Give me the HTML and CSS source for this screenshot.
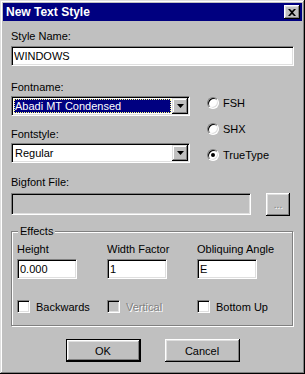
FILE: index.html
```html
<!DOCTYPE html>
<html lang="en">
  <head>
    <meta charset="UTF-8" />
    <title>New Text Style</title>
    <link rel="stylesheet" href="styles.css">
  </head>
  <body>
    <div class="window">
      <div class="titlebar">
        <span class="title">New Text Style</span>
        <span class="close">
          <svg width="8" height="7" viewBox="0 0 8 7"><path d="M0 0h2l2 2 2-2h2L5 3.5 8 7H6L4 5 2 7H0l3-3.5z" fill="#000"/></svg>
        </span>
      </div>

      <div class="content">
        <div class="label label-name">Style Name:</div>
        <input class="field field-name" type="text" value="WINDOWS" readonly>

        <div class="font-row">
          <div class="font-col">
            <div class="label">Fontname:</div>
            <div class="combo">
              <span class="combo-value combo-selected">Abadi MT Condensed</span>
              <span class="combo-btn"><svg width="7" height="4" viewBox="0 0 7 4"><path d="M0 0h7L3.5 4z" fill="#000"/></svg></span>
            </div>
            <div class="label label-style">Fontstyle:</div>
            <div class="combo">
              <span class="combo-value">Regular</span>
              <span class="combo-btn"><svg width="7" height="4" viewBox="0 0 7 4"><path d="M0 0h7L3.5 4z" fill="#000"/></svg></span>
            </div>
          </div>
          <div class="radios">
            <div class="radio"><span class="radio-dot"></span>FSH</div>
            <div class="radio"><span class="radio-dot"></span>SHX</div>
            <div class="radio"><span class="radio-dot checked"></span>TrueType</div>
          </div>
        </div>

        <div class="label label-bigfont">Bigfont File:</div>
        <div class="bigfont-row">
          <input class="field field-bigfont" type="text" value="" readonly>
          <span class="btn btn-browse">...</span>
        </div>

        <fieldset class="effects">
          <legend>Effects</legend>
          <div class="effects-grid">
            <div class="label">Height</div>
            <div class="label">Width Factor</div>
            <div class="label">Obliquing Angle</div>
            <input class="field field-small" type="text" value="0.000" readonly>
            <input class="field field-small" type="text" value="1" readonly>
            <input class="field field-small" type="text" value="E" readonly>
            <div class="check"><span class="check-box"></span>Backwards</div>
            <div class="check check-disabled"><span class="check-box"></span>Vertical</div>
            <div class="check"><span class="check-box"></span>Bottom Up</div>
          </div>
        </fieldset>

        <div class="actions">
          <span class="btn btn-default">OK</span>
          <span class="btn">Cancel</span>
        </div>
      </div>
    </div>
  </body>
</html>
```

FILE: styles.css
```css
body {
  margin: 0;
  font-family: "Liberation Sans", Arial, sans-serif;
  font-size: 11px;
  color: #000;
}
.window {
  width: 305px;
  height: 374px;
  box-sizing: border-box;
  padding: 3px;
  background: #c0c0c0;
  box-shadow: inset -1px -1px #000, inset 1px 1px #dfdfdf, inset -2px -2px #808080, inset 2px 2px #fff;
}
.titlebar {
  height: 18px;
  background: #000080;
  color: #fff;
  display: flex;
  align-items: center;
  justify-content: space-between;
  padding: 0 2px 0 3px;
}
.title {
  font-weight: bold;
  font-size: 12px;
}
.close {
  width: 16px;
  height: 14px;
  background: #c0c0c0;
  display: flex;
  align-items: center;
  justify-content: center;
  box-shadow: inset -1px -1px #000, inset 1px 1px #fff, inset -2px -2px #808080, inset 2px 2px #dfdfdf;
}
.content {
  padding: 0 8px;
}
.label {
  line-height: 13px;
  height: 13px;
  white-space: nowrap;
}
.label-name {
  margin-top: 9px;
}
.field {
  display: block;
  box-sizing: border-box;
  height: 20px;
  margin: 3px 0 0;
  padding: 0 2px;
  font-family: inherit;
  font-size: 11px;
  color: #000;
  background: #fff;
  border: 1px solid;
  border-color: #808080 #fff #fff #808080;
  box-shadow: inset 1px 1px #000, inset -1px -1px #dfdfdf;
  outline: none;
}
.field-name {
  width: 283px;
}
.font-row {
  display: flex;
  margin-top: 15px;
}
.font-col {
  width: 179px;
}
.combo {
  display: flex;
  box-sizing: border-box;
  height: 20px;
  margin-top: 2px;
  padding: 1px;
  background: #fff;
  border: 1px solid;
  border-color: #808080 #fff #fff #808080;
  box-shadow: inset 1px 1px #000, inset -1px -1px #dfdfdf;
}
.combo-value {
  flex: 1;
  margin: 1px;
  padding-left: 1px;
  line-height: 14px;
  white-space: nowrap;
}
.combo-selected {
  background: #000080;
  color: #fff;
  outline: 1px dotted #ffff80;
  outline-offset: -1px;
}
.combo-btn {
  width: 16px;
  height: 16px;
  display: flex;
  align-items: center;
  justify-content: center;
  background: #c0c0c0;
  box-shadow: inset -1px -1px #000, inset 1px 1px #dfdfdf, inset -2px -2px #808080, inset 2px 2px #fff;
}
.label-style {
  margin-top: 12px;
}
.radios {
  display: flex;
  flex-direction: column;
  gap: 13px;
  margin-left: 17px;
  padding-top: 15px;
}
.radio {
  display: flex;
  align-items: center;
  gap: 4px;
  height: 13px;
}
.radio-dot {
  position: relative;
  width: 12px;
  height: 12px;
  box-sizing: border-box;
  border-radius: 50%;
  background: #fff;
  border: 1px solid;
  border-color: #808080 #fff #fff #808080;
  box-shadow: inset 1px 1px #000, inset -1px -1px #dfdfdf;
}
.radio-dot.checked::after {
  content: "";
  position: absolute;
  left: 3px;
  top: 3px;
  width: 4px;
  height: 4px;
  border-radius: 50%;
  background: #000;
}
.label-bigfont {
  margin-top: 13px;
}
.bigfont-row {
  display: flex;
  align-items: flex-start;
  gap: 15px;
  margin-top: 4px;
}
.field-bigfont {
  width: 240px;
  height: 22px;
  margin: 0;
  background: #c0c0c0;
}
.btn {
  display: flex;
  align-items: center;
  justify-content: center;
  box-sizing: border-box;
  width: 75px;
  height: 23px;
  background: #c0c0c0;
  box-shadow: inset -1px -1px #000, inset 1px 1px #fff, inset -2px -2px #808080, inset 2px 2px #dfdfdf;
}
.btn-browse {
  width: 24px;
  color: #808080;
  text-shadow: 1px 1px #fff;
  font-size: 10px;
}
.effects {
  margin: 9px 1px 0 0;
  padding: 5px 5px 12px 5px;
  border: 1px solid #808080;
  box-shadow: inset 1px 1px #fff, 1px 1px #fff;
}
.effects legend {
  margin-left: 1px;
  padding: 0 2px;
  line-height: 13px;
  background: #c0c0c0;
}
.effects-grid {
  display: grid;
  grid-template-columns: 90px 90px 1fr;
}
.field-small {
  width: 60px;
}
.check {
  display: flex;
  align-items: center;
  gap: 6px;
  height: 13px;
  margin-top: 21px;
}
.check-box {
  width: 13px;
  height: 13px;
  box-sizing: border-box;
  background: #fff;
  border: 1px solid;
  border-color: #808080 #fff #fff #808080;
  box-shadow: inset 1px 1px #000, inset -1px -1px #dfdfdf;
}
.check-disabled {
  color: #808080;
  text-shadow: 1px 1px #fff;
}
.check-disabled .check-box {
  background: #c0c0c0;
}
.actions {
  display: flex;
  justify-content: center;
  gap: 24px;
  margin-top: 13px;
}
.btn-default {
  border: 1px solid #000;
}
```
